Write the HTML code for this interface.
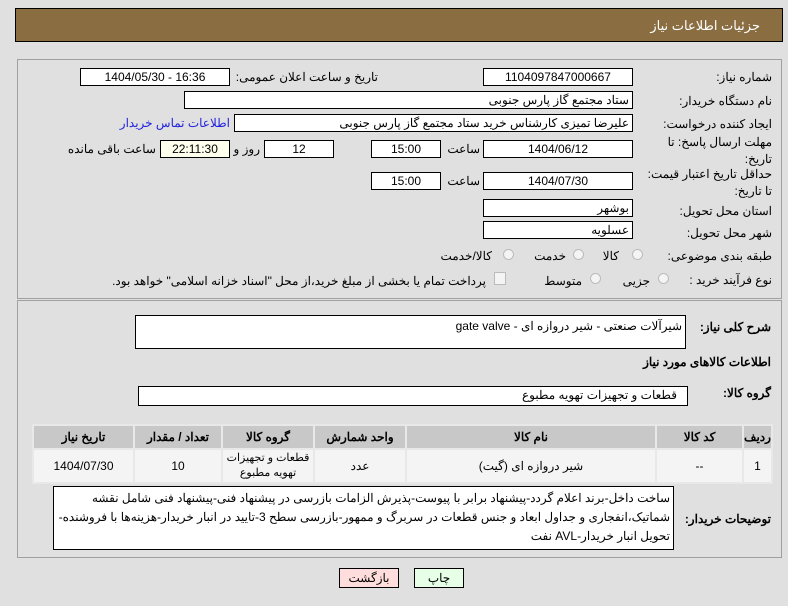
<!DOCTYPE html>
<html><head><meta charset="utf-8"><style>
body{margin:0;width:788px;height:606px;background:#E0E0E0;font-family:Tahoma,"Liberation Sans","Noto Sans CJK SC",sans-serif;font-size:12px;color:#000;position:relative;overflow:hidden}
.a{position:absolute}
.hdr{left:15px;top:8px;width:768px;height:34px;background:#8B6D42;border:1px solid #000;box-sizing:border-box}
.hdr span{position:absolute;right:22px;top:9px;color:#fff;font-size:13px}
.panel{border:1px solid #A0A0A0;background:#E0E0E0;box-sizing:border-box}
.in{position:absolute;background:#fff;border:1px solid #000;box-sizing:border-box;height:18px;line-height:16px;text-align:center;font-size:12px}
.r{text-align:right;padding-right:3px;direction:rtl}
.l{position:absolute;direction:rtl;text-align:right;white-space:nowrap}
.rad{position:absolute;width:11px;height:11px;border-radius:50%;border:1px solid #bbb;background:#f4f4f4;box-sizing:border-box}
table{border-collapse:separate;border-spacing:2px;background:#E8E8E8;table-layout:fixed}
td{text-align:center;font-size:12px;padding:0;white-space:nowrap;overflow:hidden}
.th td{background:#C8C8C8;font-weight:bold;height:22px}
.tb td{background:#F4F4F4;height:32px}
</style></head><body>
<div class="a hdr"><span>جزئیات اطلاعات نیاز</span></div>
<div class="a panel" style="left:17px;top:59px;width:765px;height:240px"></div>
<div class="a panel" style="left:17px;top:300px;width:765px;height:258px"></div>

<div class="l" style="right:16px;top:70px">شماره نیاز:</div>
<div class="in" style="left:483px;top:68px;width:150px">1104097847000667</div>
<div class="l" style="right:410px;top:70px">تاریخ و ساعت اعلان عمومی:</div>
<div class="in" style="left:80px;top:68px;width:150px">1404/05/30 - 16:36</div>

<div class="l" style="right:16px;top:94px">نام دستگاه خریدار:</div>
<div class="in r" style="left:184px;top:91px;width:449px">ستاد مجتمع گاز پارس جنوبی</div>

<div class="l" style="right:16px;top:117px">ایجاد کننده درخواست:</div>
<div class="in r" style="left:234px;top:114px;width:399px">علیرضا تمیزی کارشناس خرید ستاد مجتمع گاز پارس جنوبی</div>
<div class="l" style="right:558px;top:116px;color:#2222DD">اطلاعات تماس خریدار</div>

<div class="l" style="right:16px;top:134px;line-height:17px">مهلت ارسال پاسخ: تا<br>تاریخ:</div>
<div class="in" style="left:483px;top:140px;width:150px">1404/06/12</div>
<div class="l" style="right:308px;top:142px">ساعت</div>
<div class="in" style="left:371px;top:140px;width:70px">15:00</div>
<div class="in" style="left:264px;top:140px;width:70px">12</div>
<div class="l" style="right:528px;top:142px">روز و</div>
<div class="in" style="left:160px;top:140px;width:70px;background:#FFFFEE">22:11:30</div>
<div class="l" style="right:632px;top:142px">ساعت باقی مانده</div>

<div class="l" style="right:16px;top:166px;line-height:17px">حداقل تاریخ اعتبار قیمت:<br>تا تاریخ:</div>
<div class="in" style="left:483px;top:172px;width:150px">1404/07/30</div>
<div class="l" style="right:308px;top:174px">ساعت</div>
<div class="in" style="left:371px;top:172px;width:70px">15:00</div>

<div class="l" style="right:16px;top:204px">استان محل تحویل:</div>
<div class="in r" style="left:483px;top:199px;width:150px">بوشهر</div>
<div class="l" style="right:16px;top:226px">شهر محل تحویل:</div>
<div class="in r" style="left:483px;top:221px;width:150px">عسلویه</div>

<div class="l" style="right:16px;top:249px">طبقه بندی موضوعی:</div>
<div class="rad" style="left:632px;top:249px"></div><div class="l" style="right:169px;top:249px">کالا</div>
<div class="rad" style="left:573px;top:249px"></div><div class="l" style="right:222px;top:249px">خدمت</div>
<div class="rad" style="left:503px;top:249px"></div><div class="l" style="right:296px;top:249px">کالا/خدمت</div>

<div class="l" style="right:16px;top:273px">نوع فرآیند خرید :</div>
<div class="rad" style="left:658px;top:273px"></div><div class="l" style="right:138px;top:274px">جزیی</div>
<div class="rad" style="left:590px;top:273px"></div><div class="l" style="right:206px;top:274px">متوسط</div>
<div class="a" style="left:494px;top:272px;width:10px;height:11px;border:1px solid #bbb;background:#f4f4f4"></div>
<div class="l" style="right:302px;top:274px">پرداخت تمام یا بخشی از مبلغ خرید،از محل "اسناد خزانه اسلامی" خواهد بود.</div>

<div class="l" style="right:17px;top:320px;font-weight:bold">شرح کلی نیاز:</div>
<div class="in r" style="left:135px;top:315px;width:551px;height:34px;text-align:right;line-height:20px">شیرآلات صنعتی - شیر دروازه ای - gate valve</div>
<div class="l" style="right:17px;top:355px;font-weight:bold">اطلاعات کالاهای مورد نیاز</div>
<div class="l" style="right:17px;top:386px;font-weight:bold">گروه کالا:</div>
<div class="in r" style="left:138px;top:386px;width:550px;height:20px;padding-right:10px">قطعات و تجهیزات تهویه مطبوع</div>

<table class="a" style="left:32px;top:424px;width:741px;direction:rtl">
<colgroup><col style="width:27px"><col style="width:85px"><col style="width:248px"><col style="width:90px"><col style="width:90px"><col style="width:86px"><col></colgroup>
<tr class="th"><td>ردیف</td><td>کد کالا</td><td>نام کالا</td><td>واحد شمارش</td><td>گروه کالا</td><td>تعداد / مقدار</td><td>تاریخ نیاز</td></tr>
<tr class="tb"><td>1</td><td>--</td><td>شیر دروازه ای (گیت)</td><td>عدد</td><td style="line-height:15px;font-size:11px">قطعات و تجهیزات<br>تهویه مطبوع</td><td>10</td><td>1404/07/30</td></tr>
</table>

<div class="l" style="right:17px;top:512px;font-weight:bold">توضیحات خریدار:</div>
<div class="in r" style="left:53px;top:486px;width:621px;height:64px;text-align:right;line-height:19px;padding:2px 3px">ساخت داخل-برند اعلام گردد-پیشنهاد برابر با پیوست-پذیرش الزامات بازرسی در پیشنهاد فنی-پیشنهاد فنی شامل نقشه شماتیک،انفجاری و جداول ابعاد و جنس قطعات در سربرگ و ممهور-بازرسی سطح 3-تایید در انبار خریدار-هزینه‌ها با فروشنده-تحویل انبار خریدار-AVL نفت</div>

<div class="in" style="left:339px;top:568px;width:60px;height:20px;line-height:18px;background:#FFDDDD">بازگشت</div>
<div class="in" style="left:414px;top:568px;width:50px;height:20px;line-height:18px;background:#E6FFE6">چاپ</div>
</body></html>
